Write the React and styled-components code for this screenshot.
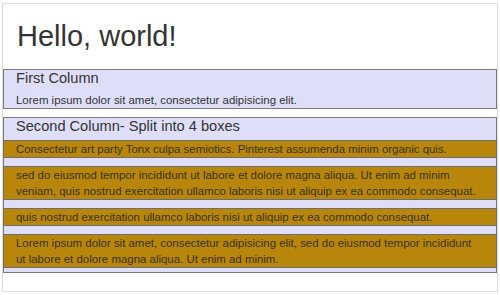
import React from "react";
import styled, { createGlobalStyle } from "styled-components";

const GlobalStyle = createGlobalStyle`
  html, body {
    margin: 0;
    padding: 0;
    background: #fff;
  }
  body {
    font-family: "Liberation Sans", Arial, Helvetica, sans-serif;
    color: #333;
  }
`;

const Frame = styled.div`
  margin: 3px 2px 0 2px;
  height: 287px;
  border: 1px solid #dcdcdc;
  background: #fff;
`;

const Title = styled.h1`
  margin: 16px 0 16px 14px;
  font-size: 29px;
  line-height: 33px;
  font-weight: 400;
  color: #333;
`;

const Column = styled.section`
  border: 1px solid #7a7a7a;
  background: #dedef8;
  margin-bottom: ${(p) => p.$gap || 0}px;
  padding-bottom: ${(p) => p.$padBottom || 0}px;
`;

const ColumnTitle = styled.h2`
  margin: 0 0 ${(p) => p.$space || 0}px 12px;
  font-size: 14.6px;
  line-height: 16px;
  font-weight: 400;
  color: #333;
`;

const Text = styled.p`
  margin: 0 0 0 12px;
  font-size: 11.45px;
  line-height: 16px;
  color: #333;
`;

const Stack = styled.div`
  display: flex;
  flex-direction: column;
  gap: 8px;
`;

const Box = styled.div`
  margin: 0 -1px;
  border: 1px solid #6e6e6e;
  background: #b8860b;
  padding: 0 16px 0 12px;
  font-size: 11.45px;
  line-height: 16px;
  color: #3a3220;
`;

const boxes = [
  "Consectetur art party Tonx culpa semiotics. Pinterest assumenda minim organic quis.",
  "sed do eiusmod tempor incididunt ut labore et dolore magna aliqua. Ut enim ad minim veniam, quis nostrud exercitation ullamco laboris nisi ut aliquip ex ea commodo consequat.",
  "quis nostrud exercitation ullamco laboris nisi ut aliquip ex ea commodo consequat.",
  "Lorem ipsum dolor sit amet, consectetur adipisicing elit, sed do eiusmod tempor incididunt ut labore et dolore magna aliqua. Ut enim ad minim.",
];

export default function App() {
  return (
    <>
      <GlobalStyle />
      <Frame>
        <Title>Hello, world!</Title>
        <Column $gap={8}>
          <ColumnTitle $space={6}>First Column</ColumnTitle>
          <Text>Lorem ipsum dolor sit amet, consectetur adipisicing elit.</Text>
        </Column>
        <Column $padBottom={4}>
          <ColumnTitle $space={6}>Second Column- Split into 4 boxes</ColumnTitle>
          <Stack>
            {boxes.map((t, i) => (
              <Box key={i}>{t}</Box>
            ))}
          </Stack>
        </Column>
      </Frame>
    </>
  );
}
